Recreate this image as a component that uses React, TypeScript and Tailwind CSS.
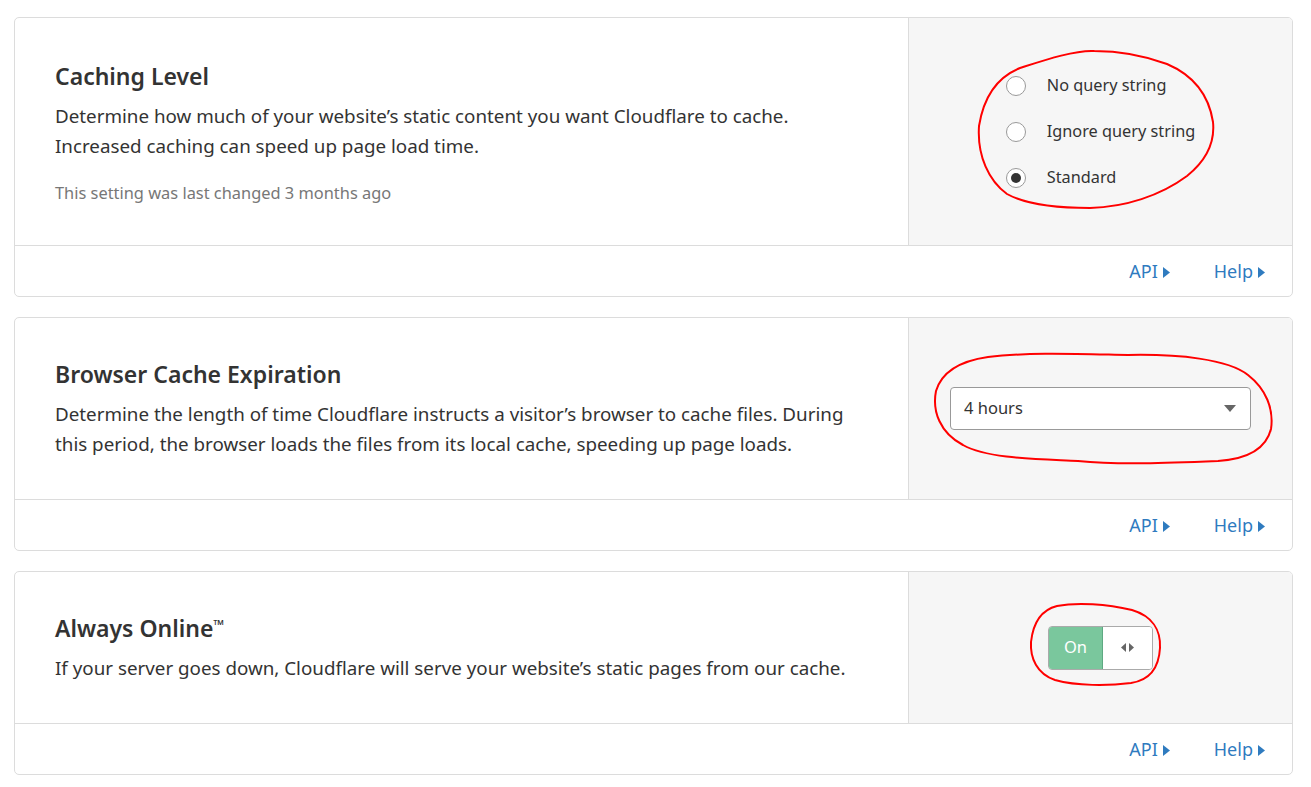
import { useState } from "react";

const font = { fontFamily: '"Noto Sans", "Open Sans", Arial, sans-serif' };

function Caret() {
  return (
    <svg width="7" height="11" viewBox="0 0 7 11" className="inline-block ml-[5px] mt-[2px]">
      <path d="M0 0 L7 5.5 L0 11 Z" fill="#2f7bbf" />
    </svg>
  );
}

// hand-drawn red marker loop laid over a control
function Scribble({ className, d, w, h }: { className: string; d: string; w: number; h: number }) {
  return (
    <svg className={"absolute pointer-events-none " + className} width={w} height={h} viewBox={`0 0 ${w} ${h}`}>
      <path d={d} fill="none" stroke="#f00" strokeWidth="2" strokeLinecap="round" strokeLinejoin="round" />
    </svg>
  );
}

function Card({ title, children, control, extra, height }: { title: React.ReactNode; children: React.ReactNode; control: React.ReactNode; extra?: React.ReactNode; height: string }) {
  return (
    <div className="border border-[#dcdcdc] rounded-[5px] bg-white overflow-hidden">
      <div className={"flex " + height}>
        <div className="flex-1 pl-[40px] pr-6 flex flex-col justify-center">
          <h2 className="text-[23px] font-semibold text-[#333] leading-[30px]">{title}</h2>
          <p className="text-[18.8px] leading-[30px] text-[#333] mt-[10px]">{children}</p>
          {extra}
        </div>
        <div className="relative w-[384px] bg-[#f6f6f6] border-l border-[#dcdcdc] flex items-center justify-center">
          {control}
        </div>
      </div>
      <div className="border-t border-[#dcdcdc] h-[51px] flex items-center justify-end pr-[27px] gap-[44px] text-[18px] text-[#2f7bbf]">
        <span className="flex items-center">API<Caret /></span>
        <span className="flex items-center">Help<Caret /></span>
      </div>
    </div>
  );
}

function Radio({ label, checked, onClick }: { label: string; checked: boolean; onClick: () => void }) {
  return (
    <label className="flex items-center h-[46px] cursor-pointer" onClick={onClick}>
      <span className="w-[20px] h-[20px] rounded-full border border-[#999] bg-white flex items-center justify-center">
        {checked && <span className="w-[10px] h-[10px] rounded-full bg-[#333]" />}
      </span>
      <span className="ml-[21px] text-[16.3px] text-[#333]">{label}</span>
    </label>
  );
}

export default function App() {
  const [level, setLevel] = useState("Standard");
  const [on, setOn] = useState(true);

  return (
    <div className="min-h-screen bg-white pl-[14px] pr-[18px] pt-[17px] flex flex-col gap-[20px]" style={font}>
      <Card
        height="h-[227px]"
        title="Caching Level"
        control={
          <>
            <div className="flex flex-col">
              {["No query string", "Ignore query string", "Standard"].map((l) => (
                <Radio key={l} label={l} checked={level === l} onClick={() => setLevel(l)} />
              ))}
            </div>
            <Scribble
              className="left-[66px] top-[28px]"
              w={244}
              h={166}
              d="M119 5 C100 4 70 14 45 22 C20 32 8 55 4 80 C2 110 14 135 32 148 C50 158 80 162 115 162 C150 161 185 150 212 130 C232 114 240 96 238 76 C234 50 220 30 192 18 C165 8 140 5 119 5"
            />
          </>
        }
        extra={<p className="text-[16.4px] text-[#777] mt-[22px] leading-[20px]">This setting was last changed 3 months ago</p>}
      >
        Determine how much of your website’s static content you want Cloudflare to cache.
        <br />
        Increased caching can speed up page load time.
      </Card>
      <Card
        height="h-[181px]"
        title="Browser Cache Expiration"
        control={
          <>
            <div className="w-[301px] h-[43px] border border-[#999] rounded-[4px] bg-white flex items-center justify-between pl-[13px] pr-[14px]">
              <span className="text-[16.5px] text-[#333]">4 hours</span>
              <svg width="12" height="7" viewBox="0 0 12 7">
                <path d="M0 0 L12 0 L6 7 Z" fill="#666" />
              </svg>
            </div>
            <Scribble
              className="left-[19px] top-[31px]"
              w={348}
              h={120}
              d="M60 8 C100 3 150 5 200 6 C250 5 300 10 320 26 C338 40 346 60 343 80 C338 100 320 110 290 112 C240 114 190 116 150 112 C110 110 60 110 35 96 C12 84 4 62 8 42 C14 22 32 12 60 8"
            />
          </>
        }
      >
        Determine the length of time Cloudflare instructs a visitor’s browser to cache files. During
        <br />
        this period, the browser loads the files from its local cache, speeding up page loads.
      </Card>
      <Card
        height="h-[151px]"
        title={<>Always Online<sup className="text-[14px] font-normal">™</sup></>}
        control={
          <>
            <button onClick={() => setOn(!on)} className="flex h-[44px] w-[105px] rounded-[4px] overflow-hidden border border-[#aaa]">
              <span className="w-[54px] h-full bg-[#7ac79d] border-r border-[#5ea982] text-white text-[16.5px] flex items-center justify-center">On</span>
              <span className="flex-1 h-full bg-white flex items-center justify-center gap-[3px]">
                <svg width="5" height="9" viewBox="0 0 5 9"><path d="M5 0 L0 4.5 L5 9 Z" fill="#666" /></svg>
                <svg width="5" height="9" viewBox="0 0 5 9"><path d="M0 0 L5 4.5 L0 9 Z" fill="#666" /></svg>
              </span>
            </button>
            <Scribble
              className="left-[118px] top-[28px]"
              w={140}
              h={90}
              d="M30 6 C50 2 80 4 105 10 C125 16 134 30 133 48 C132 66 124 80 104 83 C80 86 50 86 28 80 C10 74 3 58 4 42 C6 24 14 10 30 6"
            />
          </>
        }
      >
        If your server goes down, Cloudflare will serve your website’s static pages from our cache.
      </Card>
    </div>
  );
}
